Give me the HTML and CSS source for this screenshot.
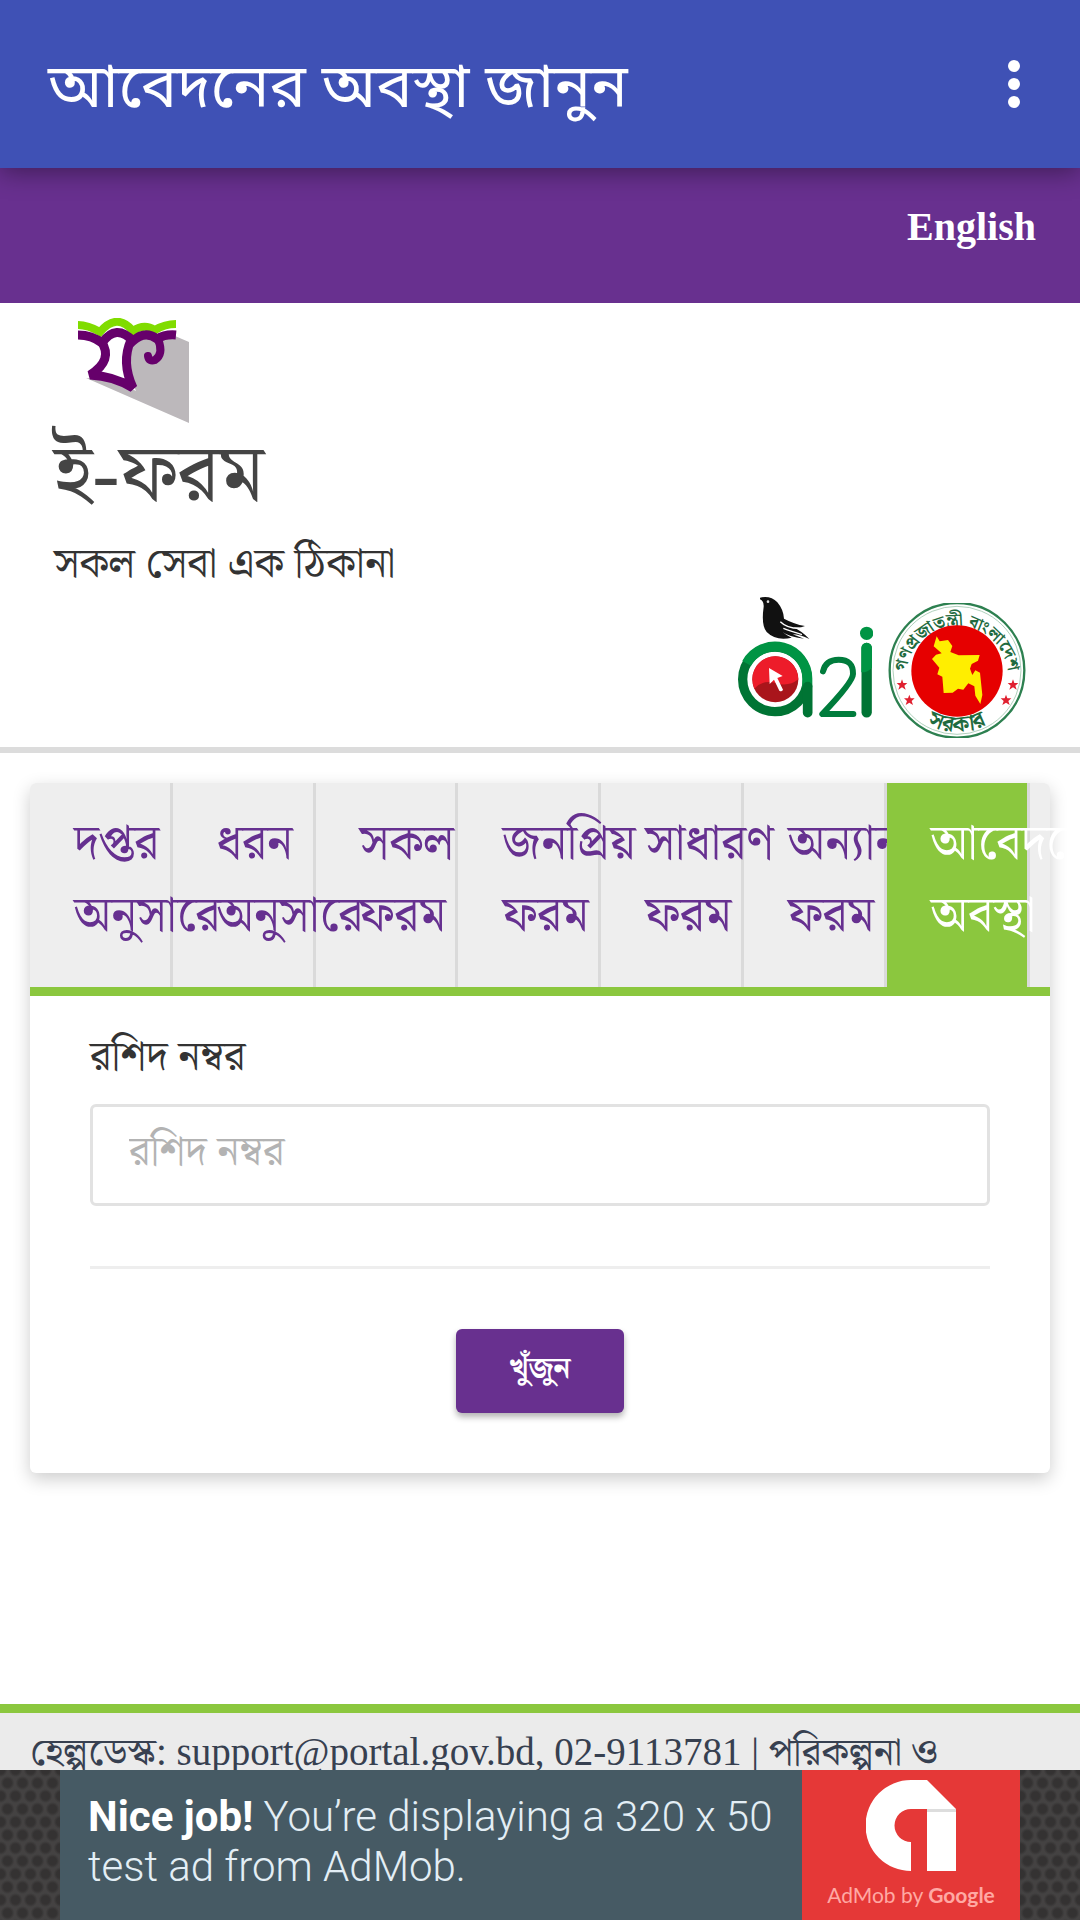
FILE: index.html
```html
<!DOCTYPE html>
<html lang="bn">
<head>
<meta charset="utf-8">
<meta name="viewport" content="width=device-width, initial-scale=1">
<title>আবেদনের অবস্থা জানুন</title>
<link rel="stylesheet" href="styles.css">
</head>
<body>
<header class="app-bar">
  <h1 class="app-title">আবেদনের অবস্থা জানুন</h1>
  <button class="menu-button" type="button" aria-label="মেনু">
    <svg width="12" height="50" viewBox="0 0 12 50" fill="#fff" aria-hidden="true"><circle cx="6" cy="7" r="6"/><circle cx="6" cy="25" r="6"/><circle cx="6" cy="43" r="6"/></svg>
  </button>
</header>

<main class="page">
  <nav class="lang-bar"><a class="lang-link" href="#" lang="en">English</a></nav>

  <section class="site-header">
    <svg class="eform-logo" viewBox="0 0 114 105" aria-hidden="true">
      <path d="M57 22Q75 12 100 18L114 24V105L11 60L40 62L61 73Q48 45 57 22Z" fill="#bcb8bb"/>
      <path d="M28 23Q42 8 56 22Q47 42 57 65L44 59L24 56Q38 42 28 23Z" fill="#fff"/>
      <g fill="none">
        <path d="M3 7Q13 7 25 14Q42-6 58 13Q69 5 80 12Q90 6 101 6" stroke="#80dc00" stroke-width="8"/>
        <path d="M3 17Q17 17 27 25Q41 5 58 23Q70 12 82 21Q90 16 101 17" stroke="#66006b" stroke-width="9"/>
        <path d="M26 23Q39 42 15 57Q39 58 58 70Q46 44 56 22" stroke="#66006b" stroke-width="9" stroke-miterlimit="3"/>
        <path d="M83 21Q89 36 80 42Q74 44 73 38" stroke="#66006b" stroke-width="8" stroke-linecap="round"/>
      </g>
    </svg>
    <h2 class="site-name">ই-ফরম</h2>
    <p class="site-slogan">সকল সেবা এক ঠিকানা</p>
    <div class="partners">
      <svg class="a2i-logo" viewBox="54 51 405 363" role="img" aria-label="a2i">
        <path d="M120 53Q152 46 172 67Q190 88 192 116Q222 132 255 138Q241 144 220 142Q245 153 268 177Q241 163 218 163L252 176Q205 170 188 156Q200 167 215 173Q168 184 140 156Q123 137 131 80Q132 64 120 58Z" fill="#111"/>
        <path d="M181 125Q201 145 237 145M190 145Q213 153 246 164" stroke="#fff" stroke-width="4" fill="none"/>
        <circle cx="144" cy="65" r="4" fill="#ddd"/>
        <circle cx="165" cy="298" r="97" fill="none" stroke="#007434" stroke-width="28"/>
        <path d="M80 250A97 97 0 0 1 262 298V322" fill="none" stroke="#009444" stroke-width="30"/>
        <path d="M263 320V398" fill="none" stroke="#007434" stroke-width="29" stroke-linecap="round"/>
        <circle cx="166" cy="298" r="76" fill="#fff"/>
        <circle cx="166" cy="298" r="69" fill="#a9151b"/>
        <path d="M103 326A69 69 0 1 1 235 298Q205 322 166 309Q130 298 103 326Z" fill="#ed1c2a"/>
        <path d="M147 264L188 288L172 294L189 329Q185 337 178 332L162 299L149 312Z" fill="#fff"/>
        <path d="M309 274Q317 239 356 239Q400 239 399 282Q399 306 307 402H400" fill="none" stroke="#007c3c" stroke-width="18" stroke-linecap="round" stroke-linejoin="round"/>
        <path d="M440 204V397" stroke="#007434" stroke-width="31" stroke-linecap="round"/>
        <path d="M424 204A16 16 0 0 1 456 204V263Q442 278 424 277Z" fill="#009444"/>
        <circle cx="440" cy="160" r="20" fill="#009444"/>
      </svg>
      <svg class="seal-logo" viewBox="504 69 414 405" role="img" aria-label="গণপ্রজাতন্ত্রী বাংলাদেশ সরকার">
        <defs>
          <path id="seal-top" d="M557 291A154 154 0 1 1 865 291"/>
          <path id="seal-bottom" d="M527 271A184 184 0 0 0 895 271"/>
        </defs>
        <circle cx="711" cy="271" r="202" fill="#fff" stroke="#2d8050" stroke-width="7"/>
        <circle cx="711" cy="271" r="192" fill="none" stroke="#8ab99c" stroke-width="2"/>
        <g class="seal-text" text-anchor="middle">
          <text><textPath href="#seal-top" startOffset="50%">গণপ্রজাতন্ত্রী বাংলাদেশ</textPath></text>
          <text class="seal-text-large"><textPath href="#seal-bottom" startOffset="50%">সরকার</textPath></text>
        </g>
        <circle cx="711" cy="273" r="137" fill="#e60000"/>
        <path d="M650 169L659 184L684 180L697 198L691 216L716 226L779 225L774 242L755 252L750 266L757 285L766 271L780 278L787 345L781 372L766 347L763 319L745 310L730 329L714 326L698 338L671 339L667 290L652 283L658 263L636 237L648 224L665 220L641 199Z" fill="#ffee00"/>
        <g fill="#e02030">
          <path id="star" d="M546 298L550 309L562 309L553 317L557 329L546 322L535 329L539 317L530 309L542 309Z"/>
          <use href="#star" x="22" y="46"/><use href="#star" x="333"/><use href="#star" x="312" y="46"/>
        </g>
      </svg>
    </div>
  </section>

  <section class="card">
    <nav class="tabs">
      <a class="tab" href="#">দপ্তর অনুসারে</a>
      <a class="tab" href="#">ধরন অনুসারে</a>
      <a class="tab" href="#">সকল ফরম</a>
      <a class="tab" href="#">জনপ্রিয় ফরম</a>
      <a class="tab" href="#">সাধারণ ফরম</a>
      <a class="tab" href="#">অন্যান্য ফরম</a>
      <a class="tab tab-active" href="#" aria-current="page">আবেদনের অবস্থা</a>
    </nav>
    <form class="search-form">
      <label class="field-label" for="receipt">রশিদ নম্বর</label>
      <input class="field-input" id="receipt" type="text" placeholder="রশিদ নম্বর">
      <hr class="divider">
      <button class="search-button" type="button">খুঁজুন</button>
    </form>
  </section>

  <footer class="site-footer">হেল্পডেস্ক: support@portal.gov.bd, 02-9113781 | পরিকল্পনা ও</footer>
</main>

<aside class="ad-strip" lang="en">
  <a class="ad" href="#">
    <span class="ad-copy"><strong>Nice job!</strong> You’re displaying a 320 x 50 test ad from AdMob.</span>
    <span class="ad-brand">
      <svg width="90" height="91" viewBox="0 0 90 91" aria-hidden="true">
        <path d="M61 0H45A45 45 0 0 0 45 91V62A16 16 0 0 1 45 29H61V91H90V29Z" fill="#fff"/>
        <path d="M61 29H90V32H61Z" fill="#ddd"/>
      </svg>
      <span class="ad-byline">AdMob by <b>Google</b></span>
    </span>
  </a>
</aside>
</body>
</html>
```
FILE: styles.css
```css
* { box-sizing: border-box; }

body {
  margin: 0;
  height: 100vh;
  display: flex;
  flex-direction: column;
  overflow: hidden;
  background: #fff;
  color: #333;
  font-family: "Liberation Serif", "Noto Serif Bengali", "Noto Sans Bengali", serif;
}

h1, h2, p { margin: 0; font-weight: 400; }
a { text-decoration: none; }

.app-bar {
  position: relative;
  z-index: 1;
  flex: none;
  height: 168px;
  padding: 0 48px;
  display: flex;
  align-items: center;
  justify-content: space-between;
  background: #3f51b5;
  box-shadow: 0 4px 24px rgba(0, 0, 0, 0.4);
}

.app-title {
  color: #fff;
  font-family: "Noto Sans", "Noto Sans Bengali", sans-serif;
  font-size: 61px;
  line-height: 80px;
}

.menu-button {
  width: 36px;
  height: 60px;
  padding: 0;
  border: 0;
  background: none;
  display: grid;
  place-items: center;
}

.page { flex: 1; min-height: 0; overflow: hidden; }

.lang-bar {
  height: 135px;
  padding: 35px 44px;
  background: #68308f;
  text-align: right;
}

.lang-link {
  color: #fff;
  font-size: 40px;
  line-height: 48px;
  font-weight: 700;
}

.site-header {
  display: flow-root;
  padding: 15px 54px 9px;
  border-bottom: 6px solid #dcdcdc;
}

.eform-logo { display: block; width: 114px; height: 105px; margin-left: 21px; }

.site-name {
  color: #444;
  font-size: 82px;
  line-height: 102px;
}

.site-slogan {
  padding-top: 4px;
  font-size: 42px;
  line-height: 68px;
}

.partners {
  display: flex;
  justify-content: flex-end;
  gap: 15px;
}

.a2i-logo { width: 135px; height: 121px; }
.seal-logo { width: 138px; height: 135px; margin-top: 6px; }

.seal-text {
  fill: #1f6b40;
  font-size: 52px;
  font-weight: 700;
}

.seal-text-large { font-size: 68px; }

.card {
  margin: 30px 30px 231px;
  border-radius: 6px;
  background: #fff;
  box-shadow: 0 6px 18px rgba(0, 0, 0, 0.2);
}

.tabs {
  display: flex;
  border-bottom: 9px solid #8bc73e;
  border-radius: 6px 6px 0 0;
  background: #eee;
}

.tab {
  flex: none;
  width: 14%;
  height: 204px;
  padding: 24px 0 0 44px;
  border-right: 3px solid #dadada;
  color: #663090;
  font-size: 49px;
  line-height: 72px;
}

.tab-active {
  background: #8bc73e;
  background-clip: padding-box;
  color: #fff;
}

.search-form {
  display: flex;
  flex-direction: column;
  padding: 30px 60px 60px;
}

.field-label {
  font-size: 42px;
  line-height: 60px;
  margin-bottom: 18px;
}

.field-input {
  width: 100%;
  height: 102px;
  padding: 0 36px 8px;
  border: 3px solid #e2e2e2;
  border-radius: 6px;
  background: #fff;
  color: #333;
  font-family: inherit;
  font-size: 42px;
}

.field-input::placeholder { color: #b3b3b3; opacity: 1; }

.divider {
  width: 100%;
  height: 3px;
  margin: 60px 0;
  border: 0;
  background: #eee;
}

.search-button {
  align-self: center;
  width: 168px;
  height: 84px;
  padding: 0 0 4px;
  border: 0;
  border-radius: 6px;
  background: #68308f;
  box-shadow: 0 4px 6px rgba(0, 0, 0, 0.3);
  color: #fff;
  font-family: inherit;
  font-size: 30px;
  font-weight: 700;
}

.site-footer {
  padding: 15px 30px;
  border-top: 9px solid #8bc73e;
  background: #ebebeb;
  color: #374050;
  font-size: 39px;
  line-height: 48px;
}

.ad-strip {
  position: relative;
  flex: none;
  padding: 0 60px;
  background-color: #444242;
  background-image: radial-gradient(circle, #343232 4px, transparent 7px), radial-gradient(circle, #343232 4px, transparent 7px);
  background-size: 15px 26px;
  background-position: 0 0, 8px 13px;
}

.ad {
  height: 150px;
  display: flex;
  background: #465a64;
  color: #e3eef5;
  font-family: Roboto, sans-serif;
}

.ad-copy {
  flex: 1;
  padding: 22px 0 0 28px;
  font-size: 42px;
  font-weight: 300;
  line-height: 50px;
}

.ad-copy strong { color: #fff; font-weight: 700; }

.ad-brand {
  width: 218px;
  padding-top: 10px;
  display: flex;
  flex-direction: column;
  align-items: center;
  gap: 10px;
  background: #e53837;
}

.ad-byline {
  color: #ffa9a4;
  font-family: Lato, sans-serif;
  font-size: 21px;
  font-weight: 400;
  line-height: 28px;
}
```
